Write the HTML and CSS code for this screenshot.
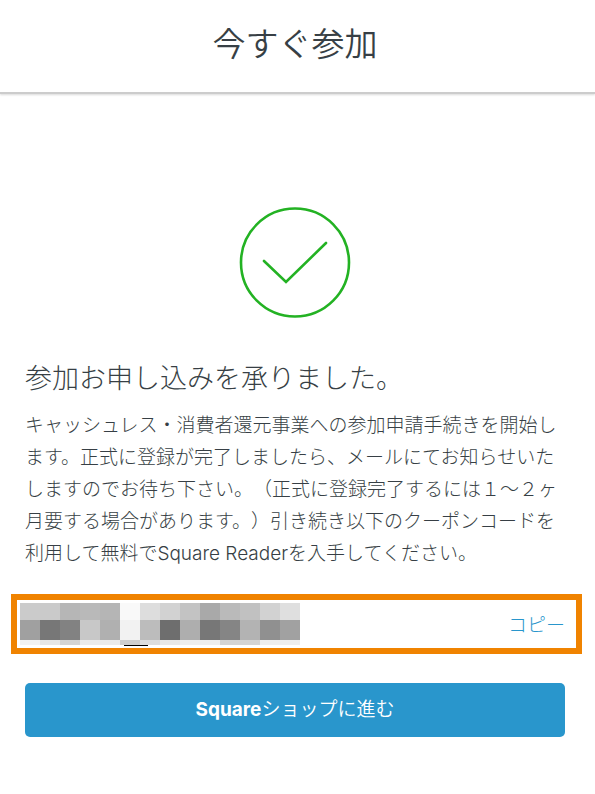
FILE: index.html
```html
<!DOCTYPE html>
<html lang="ja">
<head>
    <meta charset="UTF-8">
    <meta name="viewport" content="width=device-width, initial-scale=1.0">
    <title>今すぐ参加</title>
    <link rel="stylesheet" href="styles.css">
</head>
<body>
    <header class="header">
        <h1 class="title">今すぐ参加</h1>
    </header>

    <main class="main">
        <svg class="check" viewBox="0 0 112 112" aria-hidden="true">
            <circle cx="56" cy="55.5" r="54"/>
            <path d="M25 54 L47 75 L87 36"/>
        </svg>

        <h2 class="subtitle">参加お申し込みを承りました。</h2>
        <p class="text">キャッシュレス・消費者還元事業への参加申請手続きを開始します。正式に登録が完了しましたら、メールにてお知らせいたしますのでお待ち下さい。（正式に登録完了するには１～２ヶ月要する場合があります。）引き続き以下のクーポンコードを利用して無料でSquare Readerを入手してください。</p>

        <div class="coupon">
            <!-- hidden coupon code -->
            <svg class="code" viewBox="0 0 280 43" role="img" aria-label="クーポンコード" shape-rendering="crispEdges">
                <rect x="0" y="0" width="20" height="17" fill="#cbcbcb"/>
                <rect x="20" y="0" width="20" height="17" fill="#cacaca"/>
                <rect x="40" y="0" width="20" height="17" fill="#b6b6b6"/>
                <rect x="60" y="0" width="20" height="17" fill="#b9b9b9"/>
                <rect x="80" y="0" width="20" height="17" fill="#b5b5b5"/>
                <rect x="100" y="0" width="20" height="17" fill="#f9f9f9"/>
                <rect x="120" y="0" width="20" height="17" fill="#dddddd"/>
                <rect x="140" y="0" width="20" height="17" fill="#d2d2d2"/>
                <rect x="160" y="0" width="20" height="17" fill="#c3c3c3"/>
                <rect x="180" y="0" width="20" height="17" fill="#a9a9a9"/>
                <rect x="200" y="0" width="20" height="17" fill="#bababa"/>
                <rect x="220" y="0" width="20" height="17" fill="#c1c1c1"/>
                <rect x="240" y="0" width="20" height="17" fill="#d2d2d2"/>
                <rect x="260" y="0" width="20" height="17" fill="#dfdfdf"/>

                <rect x="0" y="17" width="20" height="20" fill="#a0a0a0"/>
                <rect x="20" y="17" width="20" height="20" fill="#777777"/>
                <rect x="40" y="17" width="20" height="20" fill="#828282"/>
                <rect x="60" y="17" width="20" height="20" fill="#c8c8c8"/>
                <rect x="80" y="17" width="20" height="20" fill="#b0b0b0"/>
                <rect x="100" y="17" width="20" height="20" fill="#f2f2f2"/>
                <rect x="120" y="17" width="20" height="20" fill="#bcbcbc"/>
                <rect x="140" y="17" width="20" height="20" fill="#6e6e6e"/>
                <rect x="160" y="17" width="20" height="20" fill="#aeaeae"/>
                <rect x="180" y="17" width="20" height="20" fill="#777777"/>
                <rect x="200" y="17" width="20" height="20" fill="#858585"/>
                <rect x="220" y="17" width="20" height="20" fill="#b3b3b3"/>
                <rect x="240" y="17" width="20" height="20" fill="#909090"/>
                <rect x="260" y="17" width="20" height="20" fill="#a1a1a1"/>

                <rect x="0" y="37" width="20" height="5" fill="#f2f2f2"/>
                <rect x="20" y="37" width="20" height="5" fill="#e6e6e6"/>
                <rect x="40" y="37" width="20" height="5" fill="#d4d4d4"/>
                <rect x="60" y="37" width="40" height="5" fill="#ebebeb"/>
                <rect x="100" y="37" width="20" height="5" fill="#cecece"/>
                <rect x="120" y="37" width="20" height="5" fill="#dddddd"/>
                <rect x="140" y="37" width="20" height="5" fill="#e8e8e8"/>
                <rect x="160" y="37" width="40" height="5" fill="#eeeeee"/>
                <rect x="200" y="37" width="40" height="5" fill="#d4d4d4"/>
                <rect x="240" y="37" width="40" height="5" fill="#eeeeee"/>
                <rect x="104" y="42" width="24" height="1" fill="#000000"/>
            </svg>
            <button type="button" class="copy">コピー</button>
        </div>

        <button type="button" class="btn"><b>Square</b>ショップに進む</button>
    </main>
</body>
</html>
```

FILE: styles.css
```css
*{
    margin: 0;
    padding: 0;
    box-sizing: border-box;
}
body{
    background: white;
    color: #373f45;
    font-family: Inter, "Noto Sans CJK JP", sans-serif;
    font-weight: 300;
    text-spacing-trim: space-all;
}
.header{
    padding: 20px 5px 24px 0;
    border-bottom: 2px solid #cccccc;
    box-shadow: 0 1px 2px rgba(0, 0, 0, 0.15);
    text-align: center;
}
.title{
    font-size: 33px;
    font-weight: 350;
    line-height: 48px;
}
.main{
    display: flex;
    flex-direction: column;
    padding: 113px 30px 56px 25px;
}
.check{
    align-self: center;
    width: 112px;
    height: 112px;
    fill: none;
    stroke: #23b223;
    stroke-width: 2.6;
    stroke-linecap: round;
}
.subtitle{
    margin-top: 40px;
    font-size: 27px;
    font-weight: 300;
    line-height: 40px;
}
.text{
    margin-top: 11px;
    font-size: 19px;
    line-height: 32px;
}
.coupon{
    display: flex;
    align-items: center;
    justify-content: space-between;
    margin: 24px -17px 0 -14px;
    padding: 3px 11px 2px 3px;
    border: 6px solid #f08300;
}
.code{
    width: 280px;
    height: 43px;
}
.copy{
    padding-bottom: 2px;
    border: none;
    background: none;
    color: #2996cc;
    font-family: inherit;
    font-size: 19px;
    font-weight: 300;
    cursor: pointer;
}
.btn{
    margin-top: 29px;
    padding: 12px;
    border: none;
    border-radius: 5px;
    background: #2996cc;
    color: white;
    font-family: inherit;
    font-size: 19px;
    font-weight: 350;
    line-height: 30px;
    cursor: pointer;
}
.btn b{
    font-weight: 700;
}
.btn:hover{
    background: #2285b6;
}
```
